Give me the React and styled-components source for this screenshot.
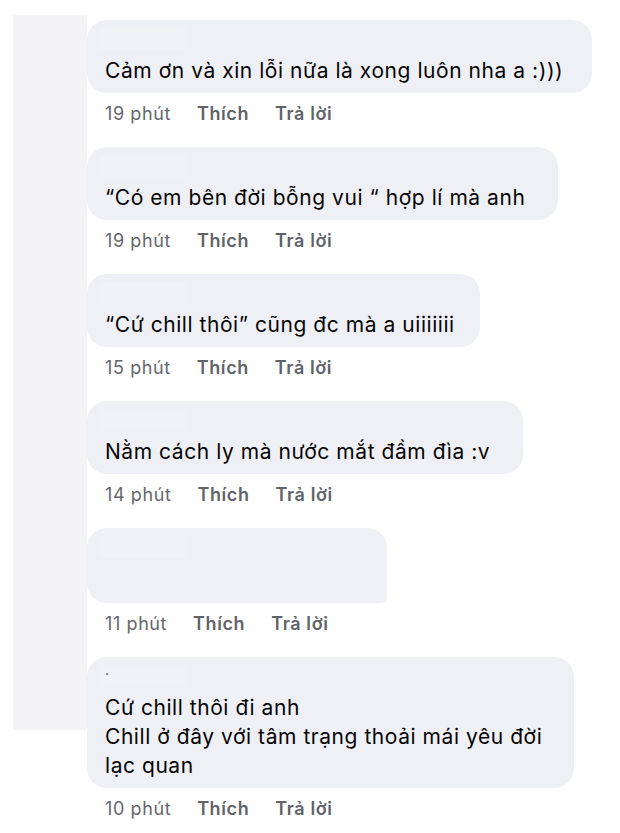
import React from "react";
import styled, { createGlobalStyle } from "styled-components";

const comments = [
  { id: 1, time: "19 phút", width: 505, lines: ["Cảm ơn và xin lỗi nữa là xong luôn nha a :)))"] },
  { id: 2, time: "19 phút", width: 471, lines: ["“Có em bên đời bỗng vui “ hợp lí mà anh"] },
  { id: 3, time: "15 phút", width: 393, lines: ["“Cứ chill thôi” cũng đc mà a uiiiiiii"] },
  { id: 4, time: "14 phút", width: 436, lines: ["Nằm cách ly mà nước mắt đầm đìa :v"] },
  { id: 5, time: "11 phút", width: 300, lines: [], empty: true },
  {
    id: 6,
    time: "10 phút",
    width: 487,
    dot: true,
    lines: ["Cứ chill thôi đi anh", "Chill ở đây với tâm trạng thoải mái yêu đời", "lạc quan"],
  },
];

const App = () => {
  return (
    <>
      <GlobalStyle />
      <Page>
        <Sidebar />
        <Thread>
          {comments.map((c) => (
            <Comment key={c.id}>
              <Bubble $w={c.width} $empty={c.empty}>
                <Name>{c.dot ? "." : ""}</Name>
                {c.lines.length > 0 && (
                  <Body>
                    {c.lines.map((l, i) => (
                      <div key={i}>{l}</div>
                    ))}
                  </Body>
                )}
              </Bubble>
              <Meta>
                <Time>{c.time}</Time>
                <Action>Thích</Action>
                <Action>Trả lời</Action>
              </Meta>
            </Comment>
          ))}
        </Thread>
      </Page>
    </>
  );
};

export default App;

const GlobalStyle = createGlobalStyle`
  html, body {
    margin: 0;
    padding: 0;
    background: #fff;
  }
  body {
    font-family: Inter, "Noto Sans", "Liberation Sans", sans-serif;
    color: #050505;
  }
`;

const Page = styled.div`
  display: flex;
  align-items: flex-start;
  padding: 15px 0 0 13px;
  width: 620px;
  height: 833px;
  box-sizing: border-box;
  overflow: hidden;
`;

const Sidebar = styled.div`
  width: 74px;
  height: 715px;
  flex-shrink: 0;
  background: #f4f4f6;
`;

const Thread = styled.div`
  display: flex;
  flex-direction: column;
  padding-top: 5px;
`;

const Comment = styled.div`
  display: flex;
  flex-direction: column;
  align-items: flex-start;
  margin-bottom: 23px;
`;

const Bubble = styled.div`
  width: ${(p) => p.$w}px;
  min-height: ${(p) => (p.$empty ? 75 : 73)}px;
  box-sizing: border-box;
  padding: 8px 0 8px 18px;
  background: #eff0f5;
  border-radius: 20px;
  ${(p) => p.$empty && "border-bottom-right-radius: 6px;"}
`;

const Name = styled.div`
  width: 86px;
  height: 22px;
  margin-left: -5px;
  margin-bottom: 6px;
  padding-left: 5px;
  box-sizing: border-box;
  background: #f1f2f6;
  font-size: 14px;
  line-height: 10px;
  color: #444;
`;

const Body = styled.div`
  font-size: 21px;
  line-height: 29px;
  letter-spacing: 0.55px;
  color: #050505;
  white-space: nowrap;
`;

const Meta = styled.div`
  display: flex;
  align-items: baseline;
  gap: 26px;
  margin-top: 11px;
  padding-left: 18px;
  font-size: 18px;
  line-height: 20px;
  letter-spacing: 0.6px;
  color: #65676b;
`;

const Time = styled.span`
  font-weight: 400;
`;

const Action = styled.span`
  font-weight: 600;
  color: #606368;
`;
